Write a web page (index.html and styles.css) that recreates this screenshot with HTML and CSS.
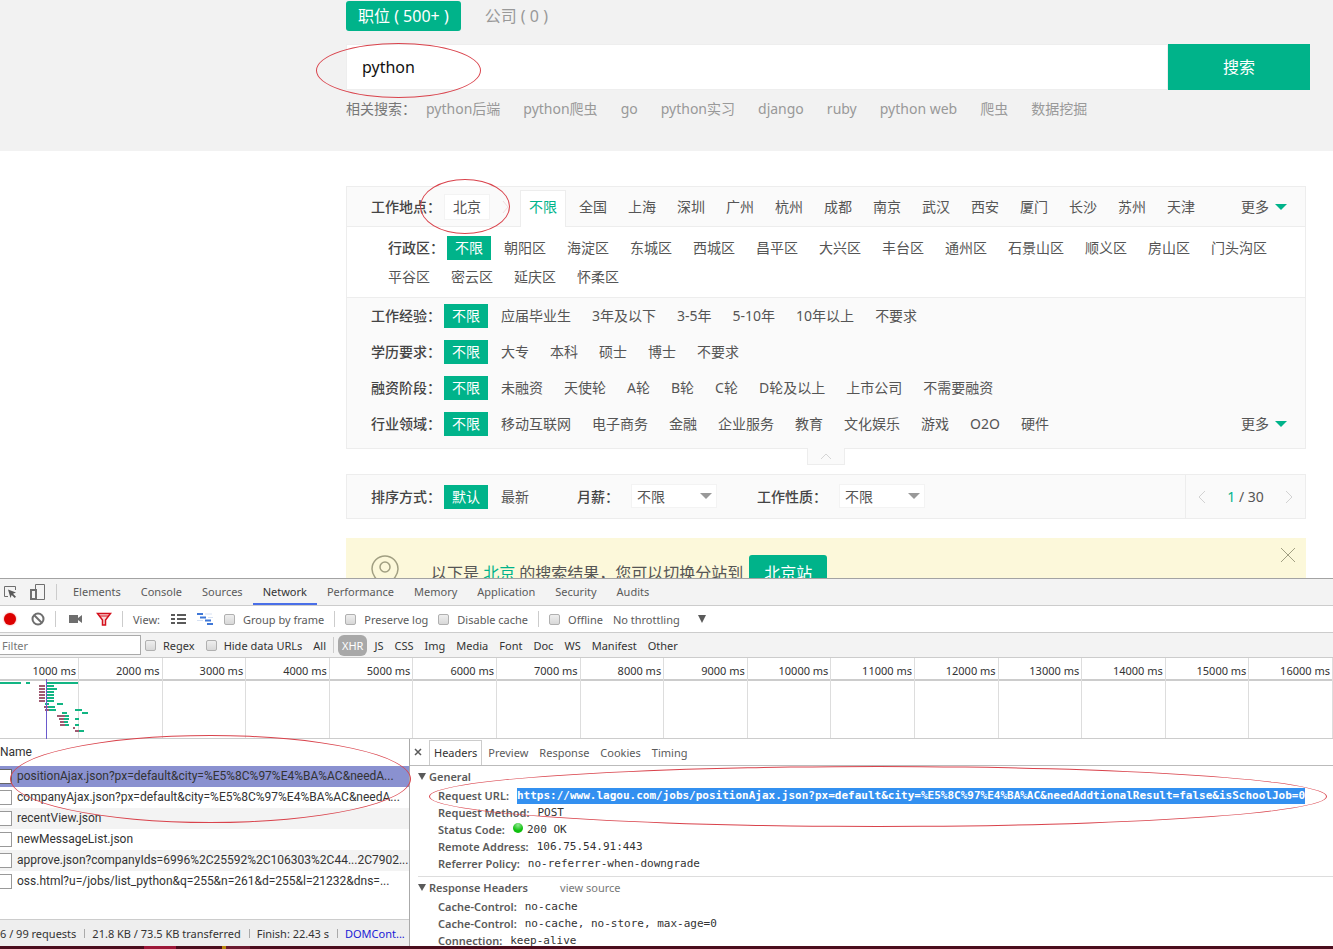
FILE: index.html
```html
<!DOCTYPE html>
<html lang="zh-cn">
<head>
    <meta charset="UTF-8">
    <title>python招聘</title>
    <link rel="stylesheet" href="styles.css">
</head>
<body>
    <main class="page">
        <!-- 搜索 -->
        <header class="search-header">
            <nav class="search-tabs">
                <a href="#" class="search-tab active">职位 ( 500+ )</a>
                <a href="#" class="search-tab">公司 ( 0 )</a>
            </nav>
            <form class="search-form">
                <input type="text" class="search-input" value="python" aria-label="搜索职位">
                <button type="button" class="search-btn">搜索</button>
                <span class="mark mark-search"></span>
            </form>
            <div class="related">
                <span class="related-label">相关搜索：</span>
                <a href="#">python后端</a>
                <a href="#">python爬虫</a>
                <a href="#">go</a>
                <a href="#">python实习</a>
                <a href="#">django</a>
                <a href="#">ruby</a>
                <a href="#">python web</a>
                <a href="#">爬虫</a>
                <a href="#">数据挖掘</a>
            </div>
        </header>

        <div class="content">
            <!-- 筛选 -->
            <section class="filter-box">
                <div class="filter-row city-row">
                    <span class="filter-label">工作地点：</span>
                    <a href="#" class="city-current">北京</a>
                    <svg class="city-arrow" width="8" height="16" viewBox="0 0 8 16"><path d="M1 2l5 6-5 6" fill="none" stroke="#f3dcdc"/></svg>
                    <a href="#" class="city-active">不限</a>
                    <a href="#">全国</a>
                    <a href="#">上海</a>
                    <a href="#">深圳</a>
                    <a href="#">广州</a>
                    <a href="#">杭州</a>
                    <a href="#">成都</a>
                    <a href="#">南京</a>
                    <a href="#">武汉</a>
                    <a href="#">西安</a>
                    <a href="#">厦门</a>
                    <a href="#">长沙</a>
                    <a href="#">苏州</a>
                    <a href="#">天津</a>
                    <button type="button" class="more">更多</button>
                    <span class="mark mark-city"></span>
                </div>
                <div class="district">
                    <span class="filter-label">行政区：</span>
                    <a href="#" class="active">不限</a>
                    <a href="#">朝阳区</a>
                    <a href="#">海淀区</a>
                    <a href="#">东城区</a>
                    <a href="#">西城区</a>
                    <a href="#">昌平区</a>
                    <a href="#">大兴区</a>
                    <a href="#">丰台区</a>
                    <a href="#">通州区</a>
                    <a href="#">石景山区</a>
                    <a href="#">顺义区</a>
                    <a href="#">房山区</a>
                    <a href="#">门头沟区</a>
                    <a href="#">平谷区</a>
                    <a href="#">密云区</a>
                    <a href="#">延庆区</a>
                    <a href="#">怀柔区</a>
                </div>
                <div class="filter-row">
                    <span class="filter-label">工作经验：</span>
                    <a href="#" class="active">不限</a>
                    <a href="#">应届毕业生</a>
                    <a href="#">3年及以下</a>
                    <a href="#">3-5年</a>
                    <a href="#">5-10年</a>
                    <a href="#">10年以上</a>
                    <a href="#">不要求</a>
                </div>
                <div class="filter-row">
                    <span class="filter-label">学历要求：</span>
                    <a href="#" class="active">不限</a>
                    <a href="#">大专</a>
                    <a href="#">本科</a>
                    <a href="#">硕士</a>
                    <a href="#">博士</a>
                    <a href="#">不要求</a>
                </div>
                <div class="filter-row">
                    <span class="filter-label">融资阶段：</span>
                    <a href="#" class="active">不限</a>
                    <a href="#">未融资</a>
                    <a href="#">天使轮</a>
                    <a href="#">A轮</a>
                    <a href="#">B轮</a>
                    <a href="#">C轮</a>
                    <a href="#">D轮及以上</a>
                    <a href="#">上市公司</a>
                    <a href="#">不需要融资</a>
                </div>
                <div class="filter-row">
                    <span class="filter-label">行业领域：</span>
                    <a href="#" class="active">不限</a>
                    <a href="#">移动互联网</a>
                    <a href="#">电子商务</a>
                    <a href="#">金融</a>
                    <a href="#">企业服务</a>
                    <a href="#">教育</a>
                    <a href="#">文化娱乐</a>
                    <a href="#">游戏</a>
                    <a href="#">O2O</a>
                    <a href="#">硬件</a>
                    <button type="button" class="more">更多</button>
                </div>
            </section>
            <button type="button" class="collapse" aria-label="收起">
                <svg width="12" height="7" viewBox="0 0 12 7"><path d="M1 6l5-5 5 5" fill="none" stroke="#d5d5d5"/></svg>
            </button>

            <!-- 排序 -->
            <section class="sort-bar">
                <span class="filter-label">排序方式：</span>
                <a href="#" class="active">默认</a>
                <a href="#">最新</a>
                <label class="sort-label" for="salary">月薪：</label>
                <span class="select-wrap">
                    <select id="salary"><option>不限</option></select>
                </span>
                <label class="sort-label" for="nature">工作性质：</label>
                <span class="select-wrap">
                    <select id="nature"><option>不限</option></select>
                </span>
                <div class="pager">
                    <button type="button" aria-label="上一页"><svg width="9" height="14" viewBox="0 0 9 14"><path d="M8 1L2 7l6 6" fill="none" stroke="#d2d2d2"/></svg></button>
                    <span><b>1</b> / 30</span>
                    <button type="button" aria-label="下一页"><svg width="9" height="14" viewBox="0 0 9 14"><path d="M1 1l6 6-6 6" fill="none" stroke="#d2d2d2"/></svg></button>
                </div>
            </section>

            <section class="notice">
                <svg class="notice-pin" width="28" height="36" viewBox="0 0 28 36" fill="none" stroke="#a19f82" stroke-width="1.500"><path d="M14 34C8 27 1 21 1 14a13 13 0 0 1 26 0c0 7-7 13-13 20z"/><circle cx="14" cy="12" r="5"/></svg>
                <p>以下是 <em>北京</em> 的搜索结果，您可以切换分站到</p>
                <button type="button" class="notice-btn">北京站</button>
                <button type="button" class="notice-close" aria-label="关闭">
                    <svg width="14" height="14" viewBox="0 0 14 14"><path d="M0 0l14 14M14 0L0 14" stroke="#a19f82"/></svg>
                </button>
            </section>
        </div>
    </main>

    <!-- 开发者工具 -->
    <section class="devtools">
        <nav class="dev-tabs">
            <button type="button" aria-label="Inspect"><svg width="14" height="14" viewBox="0 0 14 14"><path d="M12.500 5V1.500H1.500v10H5" fill="none" stroke="#6e6e6e"/><path d="M5 4.500l8 3-3 1.200 3 3-1.300 1.300-3-3L7.500 13z" fill="#5a5a5a"/></svg></button>
            <button type="button" class="device-btn" aria-label="Device"><svg width="16" height="16" viewBox="0 0 16 16" fill="none" stroke="#6e6e6e"><path d="M5.500 5V.5h9v15h-8" /><rect x="1" y="6" width="5" height="9" stroke-width="2"/></svg></button>
            <i class="sep"></i>
            <a href="#">Elements</a>
            <a href="#">Console</a>
            <a href="#">Sources</a>
            <a href="#" class="active">Network</a>
            <a href="#">Performance</a>
            <a href="#">Memory</a>
            <a href="#">Application</a>
            <a href="#">Security</a>
            <a href="#">Audits</a>
        </nav>
        <div class="dev-toolbar">
            <button type="button" class="record" aria-label="Record"></button>
            <button type="button" class="clear-btn" aria-label="Clear"><svg width="14" height="14" viewBox="0 0 14 14" fill="none" stroke="#6e6e6e" stroke-width="2"><circle cx="7" cy="7" r="5.500"/><path d="M3 3l8 8"/></svg></button>
            <i class="sep"></i>
            <button type="button" class="camera-btn" aria-label="Screenshots"><svg width="14" height="10" viewBox="0 0 14 10" fill="#6e6e6e"><path d="M0 1h9v8H0zM9 4l4-3v8l-4-3z"/></svg></button>
            <button type="button" class="funnel-btn" aria-label="Filter"><svg width="16" height="14" viewBox="0 0 16 14"><path d="M1.500 1.500h13L9.500 8v5h-3V8z" fill="#f9dada" stroke="#d4101c" stroke-width="1.500"/><path d="M3 4h10" stroke="#d4101c"/></svg></button>
            <i class="sep"></i>
            <span>View:</span>
            <button type="button" class="list-btn" aria-label="Large rows"><svg width="15" height="12" viewBox="0 0 15 12" fill="#5a5a5a"><path d="M0 1h4v2H0zM0 5h4v2H0zM0 9h4v2H0zM6 1h9v2H6zM6 5h9v2H6zM6 9h9v2H6z"/></svg></button>
            <button type="button" class="overview-btn" aria-label="Overview"><svg width="17" height="12" viewBox="0 0 17 12"><path d="M0 1h6M3 4.500h6M8 7.500h6M10 11h6" stroke="#3f78d8" stroke-width="2"/><path d="M8 1h7M11 4.500h5M0 7.500h6" stroke="#d6e1f3"/></svg></button>
            <label><input type="checkbox">Group by frame</label>
            <i class="sep"></i>
            <label><input type="checkbox">Preserve log</label>
            <label><input type="checkbox">Disable cache</label>
            <i class="sep"></i>
            <label><input type="checkbox">Offline</label>
            <select class="throttle" aria-label="Throttling"><option>No throttling</option></select>
            <span class="caret"></span>
        </div>
        <div class="dev-filter">
            <input type="text" class="filter-input" placeholder="Filter" aria-label="Filter">
            <label><input type="checkbox">Regex</label>
            <label><input type="checkbox">Hide data URLs</label>
            <button type="button">All</button>
            <i class="sep"></i>
            <button type="button" class="active">XHR</button>
            <button type="button">JS</button>
            <button type="button">CSS</button>
            <button type="button">Img</button>
            <button type="button">Media</button>
            <button type="button">Font</button>
            <button type="button">Doc</button>
            <button type="button">WS</button>
            <button type="button">Manifest</button>
            <button type="button">Other</button>
        </div>
        <div class="timeline">
            <span>1000 ms</span>
            <span>2000 ms</span>
            <span>3000 ms</span>
            <span>4000 ms</span>
            <span>5000 ms</span>
            <span>6000 ms</span>
            <span>7000 ms</span>
            <span>8000 ms</span>
            <span>9000 ms</span>
            <span>10000 ms</span>
            <span>11000 ms</span>
            <span>12000 ms</span>
            <span>13000 ms</span>
            <span>14000 ms</span>
            <span>15000 ms</span>
            <span>16000 ms</span>
            <svg class="waterfall" width="100" height="60" viewBox="0 0 100 60" stroke-width="2">
                <path d="M0 4h21M26 4h4M46 4h32M46 7h8M46 10h11M46 13h8M46 16h8M46 19h8M46 22h8M45 25h4M57 25h6M48 28h7M48 31h8M75 31h7M62 34h5M82 34h6M65 37h4M64 40h5M75 40h4M64 43h4M65 46h4M75 46h4M79 52h5" stroke="#12b583"/>
                <path d="M39 7h6M39 10h6M39 13h6M39 16h6M39 19h6M39 22h6M44 28h4M45 31h4M57 37h8M59 40h5M60 43h4M60 46h5M73 49h2M75 52h4" stroke="#a05a72"/>
                <path d="M46.500 0v60" stroke="#6a5acd" stroke-width="1"/>
            </svg>
        </div>

        <div class="panels">
            <div class="requests">
                <table>
                    <thead>
                        <tr><th>Name</th></tr>
                    </thead>
                    <tbody>
                        <tr class="selected"><td><i class="file"></i>positionAjax.json?px=default&amp;city=%E5%8C%97%E4%BA%AC&amp;needA...</td></tr>
                        <tr><td><i class="file"></i>companyAjax.json?px=default&amp;city=%E5%8C%97%E4%BA%AC&amp;needA...</td></tr>
                        <tr><td><i class="file"></i>recentView.json</td></tr>
                        <tr><td><i class="file"></i>newMessageList.json</td></tr>
                        <tr><td><i class="file"></i>approve.json?companyIds=6996%2C25592%2C106303%2C44...2C7902...</td></tr>
                        <tr><td><i class="file"></i>oss.html?u=/jobs/list_python&amp;q=255&amp;n=261&amp;d=255&amp;l=21232&amp;dns=...</td></tr>
                    </tbody>
                </table>
                <footer class="summary">
                    <span>6 / 99 requests</span>
                    <span>21.8 KB / 73.5 KB transferred</span>
                    <span>Finish: 22.43 s</span>
                    <span class="dom">DOMCont...</span>
                </footer>
            </div>
            <div class="detail">
                <nav class="detail-tabs">
                    <button type="button" class="detail-close" aria-label="Close"><svg width="8" height="8" viewBox="0 0 8 8"><path d="M1 1l6 6M7 1L1 7" stroke="#5a5a5a" stroke-width="1.500"/></svg></button>
                    <a href="#" class="active">Headers</a>
                    <a href="#">Preview</a>
                    <a href="#">Response</a>
                    <a href="#">Cookies</a>
                    <a href="#">Timing</a>
                </nav>
                <h3>General</h3>
                <dl>
                    <div><dt>Request URL:</dt><dd class="url">https://www.lagou.com/jobs/positionAjax.json?px=default&amp;city=%E5%8C%97%E4%BA%AC&amp;needAddtionalResult=false&amp;isSchoolJob=0</dd></div>
                    <div><dt>Request Method:</dt><dd>POST</dd></div>
                    <div><dt>Status Code:</dt><dd><i class="status"></i>200 OK</dd></div>
                    <div><dt>Remote Address:</dt><dd>106.75.54.91:443</dd></div>
                    <div><dt>Referrer Policy:</dt><dd>no-referrer-when-downgrade</dd></div>
                </dl>
                <h3 class="divided">Response Headers <a href="#">view source</a></h3>
                <dl>
                    <div><dt>Cache-Control:</dt><dd>no-cache</dd></div>
                    <div><dt>Cache-Control:</dt><dd>no-cache, no-store, max-age=0</dd></div>
                    <div><dt>Connection:</dt><dd>keep-alive</dd></div>
                </dl>
            </div>
            <span class="mark mark-request"></span>
            <span class="mark mark-url"></span>
        </div>
    </section>
    <div class="taskbar"></div>
</body>
</html>
```
FILE: styles.css
```css
:root {
    --green: #00b38a;
    --line: #ededed;
    --dev-line: #ccc;
    --mark: #d9434c;
}

* {
    box-sizing: border-box;
}

body {
    margin: 0;
    height: 100vh;
    display: flex;
    flex-direction: column;
    overflow: hidden;
    background: white;
    color: #555;
    font: 14px/24px "Noto Sans", "Noto Sans CJK SC", sans-serif;
}

a {
    color: inherit;
    text-decoration: none;
}

button, input, select {
    font: inherit;
    color: inherit;
    margin: 0;
    padding: 0;
    border: 0;
    border-radius: 0;
    background: none;
}

button {
    cursor: pointer;
}

svg {
    display: block;
}

.page {
    flex: 1;
    min-height: 0;
    overflow: hidden;
}

/* 红色圈注 */
.mark {
    position: absolute;
    border: 1px solid var(--mark);
    border-radius: 50%;
    pointer-events: none;
}

.mark-search {
    left: -30px;
    top: -1px;
    width: 165px;
    height: 55px;
}

.mark-city {
    left: 73px;
    top: -8px;
    width: 90px;
    height: 55px;
}

.mark-request {
    left: 10px;
    top: -4px;
    width: 401px;
    height: 88px;
}

.mark-url {
    left: 429px;
    right: 6px;
    top: 27px;
    height: 61px;
}

/* 搜索 */
.search-header {
    padding: 1px 23px 30px 346px;
    background: #f2f2f2;
}

.search-tabs {
    display: flex;
    gap: 12px;
    font-size: 16px;
    line-height: 30px;
}

.search-tab {
    padding: 0 12px;
    border-radius: 3px;
    color: #999;
}

.search-tab.active {
    background: var(--green);
    color: white;
}

.search-form {
    position: relative;
    display: flex;
    height: 46px;
    margin: 13px 0 7px;
    font-size: 16px;
}

.search-input {
    flex: 1;
    min-width: 0;
    padding: 0 15px;
    border: 1px solid #eee;
    background: white;
    color: #111;
}

.search-btn {
    width: 142px;
    background: var(--green);
    color: white;
}

.related {
    display: flex;
    gap: 23px;
    color: #999;
}

.related-label {
    width: 57px;
    white-space: nowrap;
    color: #777;
}

/* 筛选 */
.content {
    padding: 35px 27px 0 346px;
}

.filter-box {
    padding-bottom: 6px;
    border: 1px solid var(--line);
    background: #fafafa;
}

.filter-row, .sort-bar {
    display: flex;
    align-items: center;
    height: 36px;
    padding-left: 24px;
}

.filter-row a, .district a, .sort-bar a {
    margin-right: 5px;
    padding: 0 8px;
}

.filter-row .active, .district .active, .sort-bar .active {
    background: var(--green);
    color: white;
}

.filter-label {
    width: 73px;
    flex: none;
    white-space: nowrap;
    font-weight: 500;
    color: #444;
}

.city-row {
    position: relative;
    height: 40px;
    border-bottom: 1px solid var(--line);
}

.city-row .city-current {
    padding: 0 8px;
    margin-right: 12px;
    border: 1px solid #f3f3f3;
    background: white;
}

.city-arrow {
    margin-right: 10px;
}

.city-row .city-active {
    align-self: flex-end;
    margin-bottom: -1px;
    padding-bottom: 4px;
    line-height: 32px;
    border: 1px solid var(--line);
    border-bottom: 0;
    background: white;
    color: var(--green);
}

.more {
    display: flex;
    align-items: center;
    gap: 6px;
    margin-left: auto;
    margin-right: 18px;
}

.more::after {
    content: "";
    border: 6px solid transparent;
    border-top-color: var(--green);
    border-bottom: 0;
}

.district {
    display: flex;
    flex-wrap: wrap;
    row-gap: 5px;
    padding: 9px 0 8px 33px;
    border-bottom: 1px solid var(--line);
    background: white;
}

.district .filter-label {
    width: 67px;
    padding-left: 8px;
}

.collapse {
    display: flex;
    justify-content: center;
    align-items: center;
    width: 38px;
    height: 17px;
    margin: -1px auto 9px;
    border: 1px solid var(--line);
    border-top: 0;
    background: #fafafa;
}

.sort-bar {
    height: 45px;
    border: 1px solid var(--line);
    background: #fafafa;
}

.sort-label {
    width: 54px;
    margin-left: 35px;
    white-space: nowrap;
    font-weight: 500;
    color: #444;
}

.sort-label[for="nature"] {
    width: 82px;
    margin-left: 40px;
}

.select-wrap {
    position: relative;
}

.select-wrap select {
    appearance: none;
    width: 86px;
    height: 24px;
    padding: 0 5px;
    border: 1px solid #f3f3f3;
    background: white;
}

.select-wrap::after {
    content: "";
    position: absolute;
    right: 5px;
    top: 9px;
    border: 6px solid transparent;
    border-top-color: #999;
    border-bottom: 0;
    pointer-events: none;
}

.pager {
    display: flex;
    align-items: center;
    justify-content: space-between;
    align-self: stretch;
    width: 120px;
    margin-left: auto;
    padding: 0 11px;
    border-left: 1px solid var(--line);
}

.pager b {
    font-weight: 400;
    color: var(--green);
}

.notice {
    display: flex;
    align-items: flex-start;
    margin-top: 19px;
    padding: 17px 11px 17px 25px;
    background: #fcf8da;
    font-size: 16px;
    line-height: 36px;
}

.notice-pin {
    margin-right: 32px;
}

.notice p {
    margin: 0 6px 0 0;
}

.notice em {
    font-style: normal;
    color: var(--green);
}

.notice-btn {
    padding: 0 15px;
    border-radius: 3px;
    background: var(--green);
    color: white;
}

.notice-close {
    margin: -7px 0 0 auto;
}

/* 开发者工具 */
.devtools {
    flex: none;
    border-top: 1px solid #a3a3a3;
    background: white;
    color: #5a5a5a;
    font: 11px/17px "Noto Sans", sans-serif;
}

.dev-tabs, .dev-toolbar, .dev-filter {
    display: flex;
    align-items: center;
    border-bottom: 1px solid var(--dev-line);
}

.sep {
    flex: none;
    width: 1px;
    height: 16px;
    background: var(--dev-line);
}

.dev-tabs {
    height: 27px;
    padding-left: 3px;
    background: #f3f3f3;
}

.dev-tabs a {
    padding: 0 10px;
    line-height: 26px;
}

.dev-tabs .sep {
    margin: 0 6px 0 10px;
}

.dev-tabs .active {
    box-shadow: inset 0 -2px #4a6fe8;
    color: #333;
}

.device-btn {
    margin-left: 13px;
}

.dev-toolbar {
    height: 27px;
    gap: 10px;
    padding-left: 4px;
}

.record {
    width: 12px;
    height: 12px;
    border-radius: 50%;
    background: #dc0000;
    box-shadow: 0 0 2px #e66;
}

.clear-btn {
    margin-left: 5px;
}

.camera-btn, .funnel-btn {
    margin-left: 3px;
}

.list-btn {
    margin-left: 1px;
}

.overview-btn {
    margin-left: 1px;
}

.devtools label {
    display: flex;
    align-items: center;
    gap: 7px;
    white-space: nowrap;
}

.dev-toolbar label {
    gap: 8px;
}

.devtools input[type="checkbox"] {
    appearance: none;
    width: 11px;
    height: 11px;
    border: 1px solid #b0b0b0;
    border-radius: 2px;
    background: linear-gradient(#eee, #d8d8d8);
}

.throttle {
    appearance: none;
}

.caret {
    margin-left: 8px;
    border: 4px solid transparent;
    border-top: 8px solid #5a5a5a;
    border-bottom: 0;
}

.dev-filter {
    height: 25px;
    gap: 11px;
    background: #f3f3f3;
    color: #333;
}

.filter-input {
    width: 141px;
    height: 20px;
    margin-right: -7px;
    padding: 0 2px;
    border: 1px solid #aaa;
    border-left: 0;
    background: white;
}

.filter-input::placeholder {
    color: #777;
}

.dev-filter .sep {
    margin: 0 -7px 0 -4px;
}

.dev-filter .active {
    height: 21px;
    margin-right: -4px;
    padding: 0 4px;
    border-radius: 6px;
    background: #a8a8a8;
    color: white;
}

.timeline {
    position: relative;
    display: grid;
    grid-template-columns: 79px repeat(15, 1fr);
    height: 81px;
    border-bottom: 1px solid var(--dev-line);
    background: linear-gradient(var(--dev-line), var(--dev-line)) 0 21px / 100% 2px no-repeat;
    color: #333;
}

.timeline span {
    padding: 4px 2px 0 0;
    border-right: 1px solid #ddd;
    text-align: right;
    white-space: nowrap;
}

.waterfall {
    position: absolute;
    left: 0;
    top: 21px;
}

.panels {
    position: relative;
    display: flex;
}

.requests {
    display: flex;
    flex-direction: column;
    flex: none;
    width: 410px;
    border-right: 1px solid #aaa;
    color: #333;
}

.requests table {
    width: 100%;
    border-collapse: collapse;
    font-family: Roboto, sans-serif;
    font-size: 12px;
}

.requests th {
    height: 27px;
    padding: 0;
    text-align: left;
    font-weight: 400;
}

.requests td {
    height: 21px;
    padding: 0;
    white-space: nowrap;
}

.requests tbody tr:nth-child(odd) {
    background: #f3f3f3;
}

.requests tbody tr.selected {
    background: #8a91d0;
}

.file {
    display: inline-block;
    width: 12px;
    height: 15px;
    margin-right: 5px;
    border: 1px solid #999;
    border-left: 0;
    background: white;
    vertical-align: middle;
}

.selected .file {
    border-color: #666;
}

.summary {
    display: flex;
    align-items: center;
    margin-top: auto;
    height: 30px;
    padding-bottom: 3px;
    border-top: 1px solid var(--dev-line);
    background: #eee;
    white-space: nowrap;
    overflow: hidden;
}

.summary span + span {
    margin-left: 8px;
    padding-left: 8px;
    background: linear-gradient(#aaa, #aaa) 0 center / 1px 9px no-repeat;
}

.summary .dom {
    color: #1a1ad6;
}

.detail {
    flex: 1;
    min-width: 0;
    overflow: hidden;
}

.detail-tabs {
    display: flex;
    align-items: flex-end;
    gap: 1px;
    height: 27px;
    padding-left: 4px;
    border-bottom: 1px solid #bbb;
}

.detail-tabs a {
    padding: 0 5px;
    line-height: 24px;
}

.detail-tabs .active {
    padding: 0 4px;
    border: 1px solid var(--dev-line);
    border-bottom: 0;
    color: #333;
}

.detail-close {
    align-self: center;
    margin-right: 6px;
}

.detail h3 {
    display: flex;
    align-items: center;
    height: 21px;
    margin: 0 0 0 8px;
    font-size: 11px;
    font-weight: 600;
}

.detail h3::before {
    content: "";
    margin-right: 3px;
    border: 4px solid transparent;
    border-top: 7px solid #5a5a5a;
    border-bottom: 0;
}

.detail .divided {
    height: 22px;
    margin-top: 4px;
    border-top: 1px solid #ddd;
}

.detail h3 a {
    margin-left: 32px;
    font-weight: 400;
    color: #777;
}

.detail dl {
    margin: 0 0 0 28px;
}

.detail dl div {
    display: flex;
    align-items: center;
    height: 17px;
    white-space: nowrap;
}

.detail dt {
    font-weight: 600;
}

.detail dd {
    margin: 0 0 0 8px;
    font-family: "DejaVu Sans Mono", monospace;
    color: #333;
}

.detail .url {
    background: #3390f0;
    color: white;
    font-weight: 700;
    line-height: 16px;
}

.status {
    display: inline-block;
    width: 10px;
    height: 10px;
    margin-right: 4px;
    border-radius: 50%;
    background: radial-gradient(circle at 50% 20%, #8fe88f, #0fc00f 60%);
}

/* 任务栏边缘 */
.taskbar {
    position: fixed;
    left: 0;
    right: 0;
    bottom: 0;
    height: 3px;
    background: linear-gradient(90deg, transparent 144px, #9c1838 144px 176px, transparent 176px 222px, #b8860b 222px 226px, #6b1a30 226px 250px, transparent 250px), #4b0d1d;
}
```
